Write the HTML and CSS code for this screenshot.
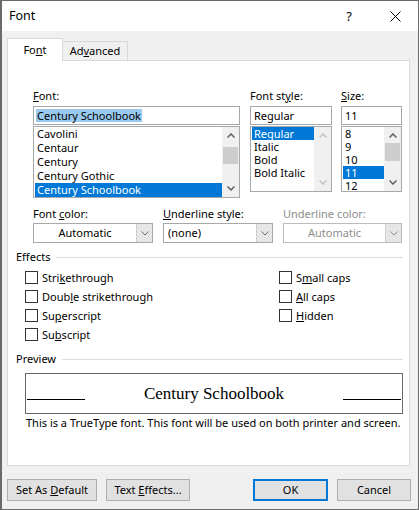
FILE: index.html
```html
<!DOCTYPE html>
<html>
<head>
<meta charset="utf-8">
<title>Font</title>
<link rel="stylesheet" href="styles.css">
</head>
<body>
<div class="window">
  <div class="titlebar">
    <span class="title">Font</span>
    <span class="tb-btn help">?</span>
    <span class="tb-btn close"><svg width="11" height="11" viewBox="0 0 11 11"><path d="M0.5 0.5 L10.5 10.5 M10.5 0.5 L0.5 10.5" stroke="#000" stroke-width="1" fill="none"/></svg></span>
  </div>
  <div class="body">
    <div class="tabs">
      <div class="tab active"><span>Fo<u>n</u>t</span></div>
      <div class="tab"><span>Ad<u>v</u>anced</span></div>
    </div>
    <div class="panel">
      <div class="font-row">
        <div class="col col-font">
          <div class="lbl"><u>F</u>ont:</div>
          <div class="input"><span class="hl">Century Schoolbook</span></div>
          <div class="list list-font">
            <div class="items">
              <div class="item">Cavolini</div>
              <div class="item">Centaur</div>
              <div class="item">Century</div>
              <div class="item">Century Gothic</div>
              <div class="item sel">Century Schoolbook</div>
            </div>
            <div class="sb">
              <div class="sb-btn"><svg width="8" height="5" viewBox="0 0 8 5"><path d="M0.5 4.5 L4 1 L7.5 4.5" class="chev"/></svg></div>
              <div class="sb-track"><div class="thumb thumb-font"></div></div>
              <div class="sb-btn"><svg width="8" height="5" viewBox="0 0 8 5"><path d="M0.5 0.5 L4 4 L7.5 0.5" class="chev"/></svg></div>
            </div>
          </div>
        </div>
        <div class="col col-style">
          <div class="lbl">Font st<u>y</u>le:</div>
          <div class="input">Regular</div>
          <div class="list list-small">
            <div class="items">
              <div class="item sel">Regular</div>
              <div class="item">Italic</div>
              <div class="item">Bold</div>
              <div class="item">Bold Italic</div>
            </div>
            <div class="sb disabled">
              <div class="sb-btn"><svg width="8" height="5" viewBox="0 0 8 5"><path d="M0.5 4.5 L4 1 L7.5 4.5" class="chev"/></svg></div>
              <div class="sb-track"></div>
              <div class="sb-btn"><svg width="8" height="5" viewBox="0 0 8 5"><path d="M0.5 0.5 L4 4 L7.5 0.5" class="chev"/></svg></div>
            </div>
          </div>
        </div>
        <div class="col col-size">
          <div class="lbl"><u>S</u>ize:</div>
          <div class="input">11</div>
          <div class="list list-small">
            <div class="items">
              <div class="item">8</div>
              <div class="item">9</div>
              <div class="item">10</div>
              <div class="item sel">11</div>
              <div class="item">12</div>
            </div>
            <div class="sb">
              <div class="sb-btn"><svg width="8" height="5" viewBox="0 0 8 5"><path d="M0.5 4.5 L4 1 L7.5 4.5" class="chev"/></svg></div>
              <div class="sb-track"><div class="thumb thumb-size"></div></div>
              <div class="sb-btn"><svg width="8" height="5" viewBox="0 0 8 5"><path d="M0.5 0.5 L4 4 L7.5 0.5" class="chev"/></svg></div>
            </div>
          </div>
        </div>
      </div>

      <div class="combo-row">
        <div class="ccol ccol-color">
          <div class="lbl">Font <u>c</u>olor:</div>
          <div class="combo">
            <div class="val center">Automatic</div>
            <div class="cbtn"><svg width="8" height="5" viewBox="0 0 8 5"><path d="M0.5 0.5 L4 4 L7.5 0.5" class="cchev"/></svg></div>
          </div>
        </div>
        <div class="ccol ccol-ustyle">
          <div class="lbl"><u>U</u>nderline style:</div>
          <div class="combo">
            <div class="val">(none)</div>
            <div class="cbtn"><svg width="8" height="5" viewBox="0 0 8 5"><path d="M0.5 0.5 L4 4 L7.5 0.5" class="cchev"/></svg></div>
          </div>
        </div>
        <div class="ccol ccol-ucolor">
          <div class="lbl dis">Underline color:</div>
          <div class="combo disabled">
            <div class="val center">Automatic</div>
            <div class="cbtn"><svg width="8" height="5" viewBox="0 0 8 5"><path d="M0.5 0.5 L4 4 L7.5 0.5" class="cchev"/></svg></div>
          </div>
        </div>
      </div>

      <div class="group-head effects-head"><span>Effects</span></div>
      <div class="effects">
        <div class="chk"><span class="box"></span><span>Stri<u>k</u>ethrough</span></div>
        <div class="chk"><span class="box"></span><span>Doub<u>l</u>e strikethrough</span></div>
        <div class="chk"><span class="box"></span><span>Su<u>p</u>erscript</span></div>
        <div class="chk"><span class="box"></span><span>Su<u>b</u>script</span></div>
        <div class="chk"><span class="box"></span><span>S<u>m</u>all caps</span></div>
        <div class="chk"><span class="box"></span><span><u>A</u>ll caps</span></div>
        <div class="chk"><span class="box"></span><span><u>H</u>idden</span></div>
      </div>

      <div class="group-head preview-head"><span>Preview</span></div>
      <div class="preview-box">
        <span class="pline"></span>
        <span class="ptext">Century Schoolbook</span>
        <span class="pline"></span>
      </div>
      <div class="info">This is a TrueType font. This font will be used on both printer and screen.</div>
    </div>

    <div class="buttons">
      <div class="btn btn-default"><span>Set As <u>D</u>efault</span></div>
      <div class="btn btn-effects"><span>Text <u>E</u>ffects...</span></div>
      <div class="spacer"></div>
      <div class="btn btn-ok"><span>OK</span></div>
      <div class="btn btn-cancel"><span>Cancel</span></div>
    </div>
  </div>
</div>
</body>
</html>
```

FILE: styles.css
```css
* { box-sizing: border-box; }
html, body { margin: 0; padding: 0; background: #ffffff; }
body {
  font-family: "Noto Sans", "Segoe UI", sans-serif;
  font-size: 11px;
  line-height: 16px;
  color: #000;
}
u { text-decoration: underline; text-underline-offset: 1px; text-decoration-thickness: 1px; }

.window {
  width: 419px;
  height: 510px;
  border: 1px solid #6a6a6a;
  border-left-width: 2px;
  background: #f0f0f0;
  display: flex;
  flex-direction: column;
  overflow: hidden;
}

.titlebar {
  height: 30px;
  flex: none;
  background: #fff;
  display: flex;
  align-items: center;
}
.title { flex: 1; padding-left: 7px; font-size: 12.5px; }
.tb-btn {
  width: 46px;
  height: 30px;
  display: flex;
  align-items: center;
  justify-content: center;
}
.help { font-size: 13px; }

.body {
  flex: 1;
  padding: 7px 8px 8px 5px;
  display: flex;
  flex-direction: column;
}

.tabs {
  display: flex;
  align-items: flex-end;
  height: 23px;
  margin-bottom: -1px;
  position: relative;
  z-index: 1;
  flex: none;
}
.tab {
  height: 20px;
  width: 65px;
  border: 1px solid #d9d9d9;
  border-left: none;
  background: #f0f0f0;
  display: flex;
  align-items: center;
  justify-content: center;
}
.tab.active {
  height: 23px;
  width: 56px;
  border-left: 1px solid #d9d9d9;
  border-bottom: none;
  background: #fff;
  padding-bottom: 1px;
}

.panel {
  height: 406px;
  flex: none;
  background: #fff;
  border: 1px solid #d9d9d9;
  padding: 27px 6px 0 8px;
}

.lbl { height: 16px; white-space: nowrap; }
.lbl.dis { color: #8d8d8d; }

.font-row {
  display: flex;
  align-items: flex-start;
  margin: 0 1px 0 17px;
}
.col { display: flex; flex-direction: column; }
.col-font { width: 207px; }
.col-style { width: 82px; margin-left: 10px; }
.col-size { width: 61px; margin-left: 9px; }

.input {
  height: 19px;
  margin-top: 2px;
  border: 1px solid #a8a8a8;
  background: #fff;
  padding-left: 3px;
  line-height: 17px;
  white-space: nowrap;
  overflow: hidden;
}
.hl { background: #99c9ef; padding: 0 1px; margin-left: -1px; line-height: 13px; display: inline-block; }

.list {
  margin-top: 1px;
  border: 1px solid #a8a8a8;
  background: #fff;
  display: flex;
  overflow: hidden;
}
.list-font { height: 72px; }
.list-small { height: 66px; }
.items { flex: 1; min-width: 0; padding-left: 1px; }
.item { height: 14px; line-height: 14px; padding-left: 2px; white-space: nowrap; overflow: hidden; }
.list-small .item { height: 13px; line-height: 13px; }
.item.sel { background: #0078d7; color: #fff; }

.sb {
  width: 17px;
  flex: none;
  background: #f0f0f0;
  display: flex;
  flex-direction: column;
}
.sb-btn {
  height: 17px;
  flex: none;
  display: flex;
  align-items: center;
  justify-content: center;
}
.sb-track { flex: 1; padding: 0 1px; }
.thumb { height: 17px; background: #cdcdcd; }
.thumb-font { margin-top: 3px; }
.thumb-size { margin-top: -1px; height: 18px; }
.chev { fill: none; stroke: #606060; stroke-width: 1.5; }
.sb.disabled .chev { stroke: #c4c4c4; }

.combo-row {
  display: flex;
  margin: 8px 1px 0 17px;
}
.ccol { display: flex; flex-direction: column; }
.ccol .combo { margin-top: 1px; }
.ccol-color { width: 120px; }
.ccol-ustyle { width: 110px; margin-left: 10px; }
.ccol-ucolor { width: 119px; margin-left: 10px; }

.combo {
  height: 20px;
  border: 1px solid #a8a8a8;
  background: #fff;
  display: flex;
}
.combo .val {
  flex: 1;
  line-height: 18px;
  padding-left: 4px;
  white-space: nowrap;
}
.combo .val.center { text-align: center; padding-left: 0; }
.cbtn {
  width: 16px;
  background: #e6e6e6;
  border-left: 1px solid #cfcfcf;
  display: flex;
  align-items: center;
  justify-content: center;
}
.cchev { fill: none; stroke: #6a6a6a; stroke-width: 1; }
.combo.disabled { border-color: #bcbcbc; }
.combo.disabled .val { color: #8d8d8d; }
.combo.disabled .cchev { stroke: #8d8d8d; }

.group-head {
  display: flex;
  align-items: center;
  height: 16px;
}
.group-head::after {
  content: "";
  flex: 1;
  height: 1px;
  background: #dcdcdc;
  margin-left: 6px;
}
.effects-head { margin-top: 6px; }
.preview-head { margin-top: 7px; }

.effects {
  margin: 3px 0 0 9px;
  display: grid;
  grid-template-columns: 254px auto;
  grid-template-rows: repeat(4, 19px);
  grid-auto-flow: column;
}
.chk {
  display: flex;
  align-items: center;
  white-space: nowrap;
}
.box {
  width: 13px;
  height: 13px;
  border: 1px solid #333;
  background: #fff;
  margin-right: 4px;
  flex: none;
}

.preview-box {
  margin: 6px 0 0 9px;
  height: 41px;
  border: 1px solid #676767;
  background: #fff;
  display: flex;
  justify-content: space-between;
  align-items: center;
  padding: 0 1px;
}
.pline {
  width: 58px;
  height: 1px;
  background: #000;
  align-self: flex-start;
  margin-top: 25px;
}
.ptext {
  font-family: "Liberation Serif", serif;
  font-size: 17px;
  line-height: 20px;
}

.info {
  margin: 1px 0 0 10px;
  white-space: nowrap;
}

.buttons {
  display: flex;
  height: 22px;
  margin-top: 13px;
  margin-right: -1px;
  flex: none;
}
.spacer { flex: 1; }
.btn {
  height: 22px;
  border: 1px solid #adadad;
  background: #e1e1e1;
  display: flex;
  align-items: center;
  justify-content: center;
  white-space: nowrap;
}
.btn-default { width: 90px; }
.btn-effects { width: 84px; margin-left: 9px; }
.btn-ok { width: 75px; border: 2px solid #0078d7; }
.btn-cancel { width: 74px; margin-left: 9px; }
```
